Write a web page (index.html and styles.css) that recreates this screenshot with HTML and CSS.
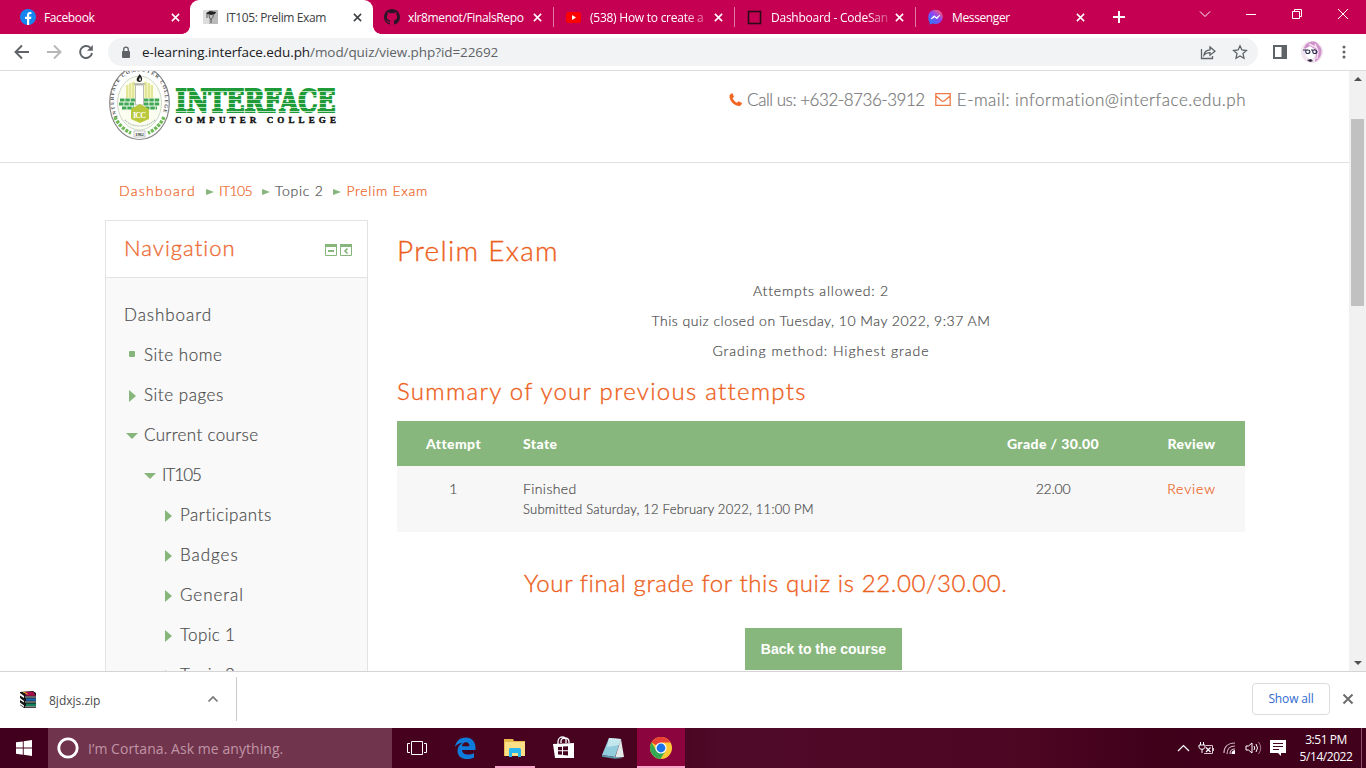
FILE: index.html
```html
<!DOCTYPE html>
<html lang="en">
<head>
<meta charset="utf-8">
<title>IT105: Prelim Exam</title>
<link rel="stylesheet" href="styles.css">
</head>
<body>
<div class="tabstrip">
  <div class="tab first">
    <svg class="fav" viewBox="0 0 16 16"><circle cx="8" cy="8" r="8" fill="#1686ee"/><path d="M7 16V10H5V7.700h2V6.200C7 4 8.200 3 10 3l1.400.1v2H10.400c-1 0-1.200.500-1.200 1.200v1.400h2.200L11 10H9.200v6z" fill="#fff"/></svg>
    <span class="tab-title">Facebook</span>
    <svg class="x" viewBox="0 0 10 10"><path d="M1 1l8 8M9 1l-8 8"/></svg>
  </div>
  <div class="tab active">
    <svg class="fav" viewBox="0 0 16 16"><path d="M0 1h15v14H0z" fill="#bbb"/><path d="M0 1h6v14H0z" fill="#ddd"/><path d="M3 4l4-2 6 1-1 2-4 1-4-1z" fill="#222"/><path d="M6 6c0 3 1 4 2 4s3-2 2-5M8 10v4M4 5v4" stroke="#555" fill="none"/></svg>
    <span class="tab-title">IT105: Prelim Exam</span>
    <svg class="x" viewBox="0 0 10 10"><path d="M1 1l8 8M9 1l-8 8"/></svg>
  </div>
  <div class="tab nosep">
    <svg class="fav" viewBox="0 0 16 16"><path fill="#2b1427" d="M8 0C3.580 0 0 3.580 0 8c0 3.540 2.290 6.530 5.470 7.590.4.070.55-.17.550-.38v-1.490c-2.230.48-2.700-.94-2.700-.94-.36-.92-.89-1.170-.89-1.170-.73-.5.050-.49.050-.49.810.06 1.230.83 1.230.83.720 1.230 1.880.870 2.340.67.070-.52.280-.87.510-1.070-1.780-.2-3.640-.89-3.640-3.950 0-.87.310-1.590.820-2.150-.08-.2-.36-1.020.080-2.120 0 0 .67-.21 2.200.820a7.600 7.600 0 014 0c1.530-1.040 2.200-.82 2.200-.82.440 1.100.160 1.920.080 2.120.510.560.820 1.270.820 2.150 0 3.070-1.870 3.750-3.650 3.950.290.250.540.730.540 1.480v2.190c0 .21.150.46.550.38A8 8 0 0016 8c0-4.420-3.580-8-8-8z"/></svg>
    <span class="tab-title">xlr8menot/FinalsRepo</span>
    <svg class="x" viewBox="0 0 10 10"><path d="M1 1l8 8M9 1l-8 8"/></svg>
  </div>
  <div class="tab">
    <svg class="fav" viewBox="0 0 16 16"><rect x="0" y="3" width="15" height="11" rx="2.500" fill="#f00"/><path d="M6 6l4 2.500L6 11z" fill="#fff"/></svg>
    <span class="tab-title fade">(538) How to create a</span>
    <svg class="x" viewBox="0 0 10 10"><path d="M1 1l8 8M9 1l-8 8"/></svg>
  </div>
  <div class="tab">
    <svg class="fav" viewBox="0 0 16 16"><rect x="1.500" y="2.500" width="12" height="12" fill="none" stroke="#2b0a18" stroke-width="1.600"/></svg>
    <span class="tab-title fade">Dashboard - CodeSan</span>
    <svg class="x" viewBox="0 0 10 10"><path d="M1 1l8 8M9 1l-8 8"/></svg>
  </div>
  <div class="tab">
    <svg class="fav" viewBox="0 0 16 16"><defs><linearGradient id="ms" x1="0" y1="1" x2=".8" y2="0"><stop offset="0" stop-color="#1688ff"/><stop offset=".6" stop-color="#8a45f5"/><stop offset="1" stop-color="#ff6070"/></linearGradient></defs><path d="M7.500 .8c4.200 0 7.300 3 7.300 7S11.700 15 7.500 15c-1 0-2-.2-2.800-.4L1.500 15.500l.2-2.300C.5 11.800.3 10 .3 8 .3 4 3.300.8 7.500.8z" fill="url(#ms)"/><path d="M3 10l3-3.300 2.500 1.800 3.300-2.300-2.800 3.500L6.500 8z" fill="#fff" stroke="#fff" stroke-width=".8"/></svg>
    <span class="tab-title">Messenger</span>
    <svg class="x" viewBox="0 0 10 10"><path d="M1 1l8 8M9 1l-8 8"/></svg>
  </div>
  <svg class="plus" viewBox="0 0 12 12"><path d="M6 0v12M0 6h12" stroke="#fff" stroke-width="2"/></svg>
  <div class="winbtns">
    <svg width="12" height="12" viewBox="0 0 12 12"><path d="M1 3.500l5 5 5-5"/></svg>
    <svg width="12" height="12" viewBox="0 0 12 12"><path d="M1 6.500h10"/></svg>
    <svg width="12" height="12" viewBox="0 0 12 12"><path d="M1.500 3.500h7v7h-7zM3.500 3.500v-2h7v7h-2"/></svg>
    <svg width="12" height="12" viewBox="0 0 12 12"><path d="M1 1l10 10M11 1L1 11"/></svg>
  </div>
</div>

<div class="toolbar">
  <svg width="16" height="16" viewBox="0 0 16 16" class="ic"><path d="M15 8H2M8 1.500L1.500 8 8 14.500"/></svg>
  <svg width="16" height="16" viewBox="0 0 16 16" class="ic dim"><path d="M1 8h13M8 1.500L14.500 8 8 14.500"/></svg>
  <svg width="16" height="16" viewBox="0 0 16 16" class="ic"><path d="M14 9a6 6 0 1 1-1.700-5.300"/><path d="M14.800 1v5.800H9z" fill="#5f6368" stroke="none"/></svg>
  <div class="omnibox">
    <svg width="10" height="13" viewBox="0 0 10 13"><rect x="1" y="5" width="8" height="7" rx="1" fill="#5f6368"/><path d="M2.700 5V3.500a2.300 2.300 0 014.600 0V5" fill="none" stroke="#5f6368" stroke-width="1.300"/></svg>
    <span class="url"><b>e-learning.interface.edu.ph</b>/mod/quiz/view.php?id=22692</span>
    <svg class="share" width="16" height="16" viewBox="0 0 16 16"><path d="M1.500 5v9.500h11V12M4 11c.5-3.500 2.500-5 6-5.200V3l5 4.200-5 4V8.600C7.500 8.500 5.500 9.200 4 11z"/></svg>
    <svg class="star" width="16" height="16" viewBox="0 0 16 16"><path d="M8 1.800l1.900 4.200 4.500.5-3.400 3.100 1 4.600L8 11.900l-4 2.300 1-4.600L1.600 6.500l4.500-.5z"/></svg>
  </div>
  <svg class="panel" width="14" height="14" viewBox="0 0 14 14"><path d="M1 1h12v12H1z" fill="none" stroke="#5f6368" stroke-width="2"/><path d="M8.500 0H14v14H8.500z" fill="#5f6368"/></svg>
  <svg class="avatar" width="22" height="22" viewBox="0 0 22 22"><circle cx="11" cy="11" r="11" fill="#f1e4f0"/><path d="M3 7C5 1 12-1 16 2l4 5c2 6-2 12-6 14l1-7-1-6-4-2-4 3z" fill="#cf92c9"/><path d="M4 8l5-3 5 4v6l-4 5-5-5z" fill="#fff"/><path d="M14 3l3 7-1 8M8 3l8 4" stroke="#f7dff4" stroke-width="1.500" fill="none"/><path d="M2 9h3m2 0c-3-1-3 4 0 3.500s2-3.500 0-3.500zm3 0h2m2 0c-3-1-3 4 0 3.500s2-3.500 0-3.500z" stroke="#222746" fill="none" stroke-width="1.100"/><path d="M6 19l4-1 2 2-3 1z" fill="#30213d"/></svg>
  <svg class="dots" width="4" height="14" viewBox="0 0 4 14"><circle cx="2" cy="2" r="1.500"/><circle cx="2" cy="7" r="1.500"/><circle cx="2" cy="12" r="1.500"/></svg>
</div>

<div class="viewport">
  <div class="page">
    <header class="site-header">
      <svg class="logo" width="240" height="76" viewBox="105 71 240 76">
        <defs>
          <pattern id="stripe" width="8" height="4" y="88" patternUnits="userSpaceOnUse"><rect width="8" height="4" fill="#b9e0bd"/><rect width="8" height="3" fill="#1f9a38"/></pattern>
          <path id="ringTop" d="M117.500 117C107 91 120 71.500 139.500 71.500s32 19.500 22 45.500"/>
        </defs>
        <ellipse cx="139.500" cy="103" rx="29.800" ry="36.500" fill="#fff" stroke="#888" stroke-width="1.200"/>
        <ellipse cx="139.500" cy="103" rx="22" ry="27" fill="#fbfdf0" stroke="#b7c7b0" stroke-width=".7"/>
        <text class="ring"><textPath href="#ringTop" textLength="116">INTERFACE COMPUTER COLLEGE</textPath></text>
        <path d="M126 98V86l9-5v17zM144 98V81l9 5v12z" fill="#f3f5bf"/>
        <path d="M127 98V85m3 13V83m3 15V82m13 16V82m3 16V83m3 15V85" stroke="#d1d66c"/>
        <path d="M135.500 85h8v20h-8z" fill="#fff" stroke="#b9beb6"/><path d="M134 84h11" stroke="#888"/>
        <path d="M139.500 74c4 4 3 8 0 8s-4-3-1-6z" fill="#222"/><path d="M140 77l1 3-1 1-1-1z" fill="#fff"/>
        <path d="M120 100h15m9 0h16M119 104h16m9 0h16M122 108h12m11 0h12" stroke="#3fa857" stroke-width="3.200" stroke-dasharray="4.500 .8"/>
        <path d="M131 109l9-5 9 5v10l-9 4-9-4z" fill="#b9c93b"/>
        <text class="icc" x="133" y="118" textLength="13">ICC</text>
        <path d="M115 117c3 7 9 13 16 16M164 117c-3 7-9 13-16 16" stroke="#6fb956" stroke-width="3.500" stroke-dasharray="3 1.200" fill="none"/>
        <path d="M125 120c7 8 22 8 30 0" stroke="#9aa" stroke-width="1.200" stroke-dasharray="1 1" fill="none"/>
        <rect x="134" y="131" width="11" height="6" fill="#fff" stroke="#888" stroke-width=".5"/>
        <text class="year" x="135" y="136.300" textLength="9">1982</text>
        <text class="brand" x="175.500" y="111.500" textLength="160" lengthAdjust="spacingAndGlyphs">INTERFACE</text>
        <text class="brand-sub" x="175" y="122.500" textLength="161">COMPUTER COLLEGE</text>
      </svg>
      <div class="contact">
        <svg width="13" height="13" viewBox="0 0 13 13"><path d="M.5 2.500C1.500.8 2.500.3 3.500.2L5 3.800 3.500 5.200C4.300 7 6 8.800 8 9.700l1.500-1.500 3.500 1.700c-.2 1.500-1.200 2.800-2.800 3C5 12.800.3 8 .5 2.500z" fill="#f26522"/></svg>
        <span class="phone">Call us: +632-8736-3912</span>
        <svg class="mail" width="16" height="13" viewBox="0 0 16 13"><path d="M.8.7h14.400v11.600H.8zM1 3l5.500 4.700c1 .8 2 .8 3 0L15 3" fill="none" stroke="#f07a45" stroke-width="1.300"/></svg>
        <span class="email">E-mail: information@interface.edu.ph</span>
      </div>
    </header>

    <nav class="crumbs">
      <a class="c1">Dashboard</a><i></i><a class="c2">IT105</a><i></i><span class="c3">Topic 2</span><i></i><a class="c4">Prelim Exam</a>
    </nav>

    <div class="columns">
      <aside class="block">
        <div class="block-head">
          <h2>Navigation</h2>
          <svg width="27" height="12" viewBox="0 0 27 12"><path d="M.5.5h11v11H.5zM15.500.5h11v11h-11z" fill="none" stroke="#87b67c"/><path d="M0 0h12v3H0zM15 0h12v3H15zM3 6h6v2H3z" fill="#87b67c"/><path d="M22.500 4.500L20 7l2.500 2.500" fill="none" stroke="#87b67c" stroke-width="1.700"/></svg>
        </div>
        <ul class="tree">
          <li class="l0 wide">Dashboard</li>
          <li class="l1"><i class="sq"></i>Site home</li>
          <li class="l1"><i class="rt"></i>Site pages</li>
          <li class="l1 snug"><i class="dn"></i>Current course</li>
          <li class="l2 tight"><i class="dn"></i>IT105</li>
          <li class="l3"><i class="rt"></i>Participants</li>
          <li class="l3 wide"><i class="rt"></i>Badges</li>
          <li class="l3 wide"><i class="rt"></i>General</li>
          <li class="l3 snug"><i class="rt"></i>Topic 1</li>
          <li class="l3 snug"><i class="rt"></i>Topic 2</li>
        </ul>
      </aside>
      <main class="content">
        <h1>Prelim Exam</h1>
        <div class="info">
          <p>Attempts allowed: 2</p>
          <p class="closed">This quiz closed on Tuesday, 10 May 2022, 9:37 AM</p>
          <p class="method">Grading method: Highest grade</p>
        </div>
        <h3>Summary of your previous attempts</h3>
        <table class="attempts">
          <thead><tr><th class="a">Attempt</th><th class="s">State</th><th class="g">Grade / 30.00</th><th class="r">Review</th></tr></thead>
          <tbody><tr><td class="a">1</td><td class="s">Finished<span class="sub">Submitted Saturday, 12 February 2022, 11:00 PM</span></td><td class="g">22.00</td><td class="r"><a>Review</a></td></tr></tbody>
        </table>
        <h3 class="final">Your final grade for this quiz is 22.00/30.00.</h3>
        <button class="back">Back to the course</button>
      </main>
    </div>
  </div>
  <div class="scrollbar"><i class="up"></i><div class="thumb"></div><i class="down"></i></div>
</div>

<div class="downloads">
  <svg width="17" height="17" viewBox="0 0 17 17"><path d="M0 1l13-1 3 2v15H4l-4-3z" fill="#151515"/><path d="M4 .8h9l3 4H6z" fill="#a90f4d"/><path d="M6 7.300h10v2.500H6z" fill="#1765a8"/><path d="M6 12.500h10v2.500H6z" fill="#12805a"/><path d="M0 2l4 3v2L0 4.500m0 2.500l4 3v1.500L0 9m0 2.500l4 3V16l-4-2.500z" fill="#fff"/><path d="M5 6h11M5 11h11M5 15.800h11" stroke="#ddd" stroke-width=".8"/><path d="M3 1l4 1.500v1" stroke="#e3c322" fill="none"/></svg>
  <span class="file">8jdxjs.zip</span>
  <svg class="chev" width="12" height="8" viewBox="0 0 12 8"><path d="M1.500 6.500L6 2l4.500 4.500" fill="none" stroke="#777" stroke-width="1.700"/></svg>
  <span class="vsep"></span>
  <span class="showall">Show all</span>
  <svg width="12" height="12" viewBox="0 0 12 12"><path d="M1.500 1.500l9 9M10.500 1.500l-9 9" stroke="#6b6b6b" stroke-width="1.900"/></svg>
</div>

<div class="taskbar">
  <div class="start"><svg width="16" height="16" viewBox="0 0 16 16"><path d="M0 2.300L6.800 1.400v6.200H0zM7.700 1.200L16 0v7.600H7.700zM0 8.500h6.800v6.200L0 13.700zM7.700 8.500H16V16l-8.300-1.200z" fill="#fff"/></svg></div>
  <div class="cortana"><svg width="22" height="22" viewBox="0 0 22 22"><circle cx="11" cy="11" r="9.200" fill="none" stroke="#fff" stroke-width="2.800"/></svg><span>I’m Cortana. Ask me anything.</span></div>
  <div class="app"><svg width="20" height="14" viewBox="0 0 20 14"><path d="M4.500.5h11v13h-11zM3 2.500H.5v9H3M17 2.500h2.500v9H17" fill="none" stroke="#fff"/></svg></div>
  <div class="app"><svg width="21" height="22" viewBox="0 0 21 22"><path d="M0 10C1 3.500 5.500.5 10.800.5 17 .5 20.500 5 20.500 10.500V13H7c.2 3.200 3 4.600 6 4.600 2.500 0 4.500-.7 6-1.600v4.500c-2 1-4.500 1.500-7 1.500-5.500 0-9.500-3-9.500-8.300 0-3.500 2-6.300 5-7.900C3.800 6.300 1.500 7.800 0 10zm7.100-.8h7.300C14.400 7 13.300 5.300 11 5.300S7.300 7 7.100 9.200z" fill="#0f7bdb"/></svg></div>
  <div class="app open"><svg width="22" height="20" viewBox="0 0 22 20"><path d="M0 1h9l1 2h11v15H0z" fill="#e7b84b"/><path d="M1 4h20v14H1z" fill="#fbdf86"/><path d="M5 19v-7c0-2 1-2 2-2h8c2 0 2 1 2 2v7h-3v-4H8v4z" fill="#29b7ef"/></svg></div>
  <div class="app"><svg width="22" height="24" viewBox="0 0 22 24"><path d="M0 8l21-1v15L2 22z" fill="#fff"/><path d="M5 8V6c0-3 2-5 4-5s4 1 4 3v3M8 7V5c0-2 2-3 4-3 3 0 4 2 4 4v1" fill="none" stroke="#fff" stroke-width="1.300"/><path d="M5 11l4-.3v3.500H5zm5-.4l5-.4v4h-5zM5 15.200h4v3.600l-4-.3zm5 0h5v4.200l-5-.5z" fill="#46031f"/></svg></div>
  <div class="app"><svg width="24" height="22" viewBox="0 0 24 22"><path d="M8 1l12 1-6 18-13-2z" fill="#91cddd"/><path d="M8 1l12 1-2 6-12 2z" fill="#c4e7ee"/><path d="M20 2l3 18-9 1z" fill="#e3e9e9"/><path d="M1 18l13 2 8 1-8 .8-13-2z" fill="#5d9aa9"/><path d="M8 2l12 1" stroke="#eee" stroke-dasharray="1 1"/></svg></div>
  <div class="app current"><svg width="22" height="22" viewBox="0 0 22 22"><circle cx="11" cy="11" r="11" fill="#fcc934"/><path d="M11 11L1.500 5.500A11 11 0 0 1 20.500 5.500H11z" fill="#e94235"/><path d="M1.500 5.500A11 11 0 0 0 10.500 22l5.200-8.500L11 11 6.300 13.600z" fill="#34a853"/><circle cx="11" cy="11" r="5.600" fill="#fff"/><circle cx="11" cy="11" r="4.400" fill="#1a73e8"/></svg></div>
  <div class="tray">
    <svg width="13" height="8" viewBox="0 0 13 8"><path d="M1 7l5.500-5.500L12 7" fill="none" stroke="#fff" stroke-width="1.200"/></svg>
    <svg width="17" height="13" viewBox="0 0 17 13"><path d="M2.500 0v3M5.500 0v3M1 3h6v2c0 3-6 3-6 0zM4 7v4" fill="none" stroke="#fff"/><path d="M8 3.500h6.500v8H6" fill="none" stroke="#d9c3cc"/><path d="M15.500 6v3" stroke="#d9c3cc"/><path d="M8 5.500l4.500 4.500M12.500 5.500L8 10" stroke="#fff" stroke-width="1.200"/></svg>
    <svg width="14" height="14" viewBox="0 0 14 14"><path d="M1 12C1 6 5 2 12 2M4 13c0-5 3-8 8-8M7 13c0-3 2-5 5-5" fill="none" stroke="#ccb7bf" stroke-width="1.200"/><path d="M12 9v4H8.500A4 4 0 0 1 12 9z" fill="#fff"/></svg>
    <svg width="17" height="14" viewBox="0 0 17 14"><path d="M1 5h2.500L7 2v10L3.500 9H1zM9 5q1.500 2 0 4M11 3q3 4 0 8" fill="none" stroke="#fff"/><path d="M13.500 1q4.500 6 0 12" fill="none" stroke="#a0788b"/></svg>
    <svg width="17" height="16" viewBox="0 0 17 16"><path d="M0 0h16v13h-5v3l-3-3H0z" fill="#fff"/><path d="M3 3.500h10M3 6.500h10M3 9.500h6" stroke="#46031f"/></svg>
    <div class="clock"><span>3:51 PM</span><span class="date">5/14/2022</span></div>
    <span class="desk"></span>
  </div>
</div>
</body>
</html>
```
FILE: styles.css
```css
* { box-sizing: border-box; }
body { margin: 0; width: 1366px; height: 768px; overflow: hidden; background: #fff; font-family: "Open Sans", "Noto Sans", sans-serif; font-size: 12px; }
svg { display: block; flex: none; }
h1, h2, h3, p, ul { margin: 0; padding: 0; font-weight: 300; }

/* tab strip */
.tabstrip { display: flex; height: 34px; background: #c50053; padding-left: 10px; }
.tab { width: 181px; height: 34px; display: flex; align-items: center; padding: 0 11px 0 12px; color: #fff; border-left: 1px solid transparent; background: linear-gradient(#df7ba5, #df7ba5) no-repeat 0 7px / 1px 20px; background-origin: border-box; }
.tab.first { background: none; padding-left: 9px; width: 180px; padding-right: 10px; }
.tab.nosep { background: none; padding-left: 11px; }
.tab.active { width: 183px; background: #fff; color: #3c4043; border-radius: 9px 9px 0 0; margin-right: -1px; position: relative; }
.tab.active::before, .tab.active::after { content: ""; position: absolute; bottom: 0; width: 8px; height: 8px; }
.tab.active::before { left: -9px; background: radial-gradient(circle at 0 0, transparent 7.500px, #fff 8px); }
.tab.active::after { right: -8px; background: radial-gradient(circle at 100% 0, transparent 7.500px, #fff 8px); }
.fav { width: 16px; height: 16px; }
.tab-title { margin-left: 8px; white-space: nowrap; overflow: hidden; font-size: 12px; letter-spacing: -.37px; margin-right: 6px; flex: 1; }
.tab.active .tab-title { margin-left: 7px; }
.fade { -webkit-mask-image: linear-gradient(90deg, #000 80%, rgba(0,0,0,.25)); mask-image: linear-gradient(90deg, #000 80%, rgba(0,0,0,.25)); letter-spacing: -.25px; }
.x { width: 9px; height: 9px; }
.x path { stroke: currentColor; stroke-width: 1.700; }
.plus { width: 12px; height: 12px; margin: 11px 0 0 17px; }
.winbtns { margin-left: auto; display: flex; gap: 34px; padding: 8px 17px 0 0; }
.winbtns path { stroke: #fff; fill: none; }

/* address bar */
.toolbar { display: flex; align-items: center; height: 37px; border-bottom: 1px solid #dcdcdc; padding: 0 20px 0 14px; }
.ic { margin-right: 16px; }
.ic path { fill: none; stroke: #5f6368; stroke-width: 1.900; }
.ic.dim path { stroke: #b5b7b9; }
.ic path[fill] { fill: #5f6368; stroke: none; }
.omnibox { width: 1150px; margin-left: -2px; height: 28px; border-radius: 14px; background: #f1f3f4; display: flex; align-items: center; padding: 0 10px 0 13px; }
.url { margin-left: 11px; font-size: 13.500px; letter-spacing: -.08px; color: #5f6368; }
.url b { font-weight: 400; color: #202124; }
.share { margin-left: auto; margin-right: 16px; }
.share path, .star path { fill: none; stroke: #5f6368; stroke-width: 1.300; }
.panel { margin-left: 15px; }
.avatar { margin-left: 14px; }
.dots { margin-left: auto; fill: #5f6368; }

/* page */
.viewport { display: flex; height: 600px; overflow: hidden; }
.page { width: 1349px; height: 600px; overflow: hidden; font-family: Lato, "Open Sans", sans-serif; font-weight: 300; color: #4c4c4c; font-variant-ligatures: none; -webkit-text-stroke: .2px currentColor; }
.logo { -webkit-text-stroke: 0; }
.site-header { height: 92px; border-bottom: 1px solid #e1e1e1; padding: 0 104px 0 105px; display: flex; justify-content: space-between; }
.ring { font: bold 5px "Liberation Serif", serif; fill: #444; }
.icc { font: bold 8px "Liberation Serif", serif; fill: #fff; }
.year { font: bold 5px "Liberation Serif", serif; fill: #444; }
.brand { font: bold 32px "DejaVu Serif", serif; fill: url(#stripe); stroke: url(#stripe); stroke-width: 2; -webkit-text-stroke: 2px; }
.brand-sub { font: bold 9px "Liberation Serif", serif; fill: #111; stroke: #111; stroke-width: .4; }
.contact { display: flex; align-items: center; height: 56px; font-size: 17px; color: #777; white-space: nowrap; }
.contact svg { margin-top: 1px; }
.phone { margin: 0 10px 0 5px; letter-spacing: -.45px; }
.email { margin-left: 6px; letter-spacing: .5px; margin-right: -1px; }
.crumbs { display: flex; align-items: center; height: 57px; padding: 0 0 2px 119px; font-size: 14px; }
.crumbs a, .attempts a { color: #ed601b; }
.crumbs i { margin: 3px 5px 0 10px; border-left: 8px solid #87b67c; border-top: 3.500px solid transparent; border-bottom: 3.500px solid transparent; }
.c1 { letter-spacing: 1.270px; }
.c2 { letter-spacing: -.6px; }
.c3, .c4 { letter-spacing: .7px; }
.columns { display: flex; padding-left: 105px; }
.block { width: 263px; height: 480px; border: 1px solid #e3e3e3; background: #f9f9f9; }
.block-head { height: 57px; background: #fff; border-bottom: 1px solid #e3e3e3; display: flex; align-items: center; justify-content: space-between; padding: 0 15px 3px 18px; }
.block-head svg { margin-top: 5px; }
.block-head h2 { font-size: 22px; color: #ed6b35; letter-spacing: 1.050px; }
.tree { list-style: none; padding: 16px 0 0 18px; font-size: 17px; letter-spacing: .55px; }
.tree li { height: 40px; display: flex; align-items: center; }
.tree .wide { letter-spacing: .95px; }
.tree .snug { letter-spacing: .35px; }
.tree .tight { letter-spacing: -1px; }
.tree i { width: 14px; margin-right: 6px; display: flex; justify-content: center; }
.tree i::before { content: ""; }
.l2 { padding-left: 18px; }
.l3 { padding-left: 36px; }
.sq::before { width: 6px; height: 6px; background: #87b67c; margin: 0 0 0 2px; border-radius: 1px; }
.rt::before { border-left: 7px solid #87b67c; border-top: 6px solid transparent; border-bottom: 6px solid transparent; margin: 3px 0 0 2px; }
.dn::before { border-top: 6px solid #87b67c; border-left: 6px solid transparent; border-right: 6px solid transparent; margin: 4px 0 0 2px; }
.content { width: 848px; margin-left: 29px; }
h1 { height: 56px; line-height: 60px; font-size: 28px; color: #ed601b; letter-spacing: 1.300px; }
.info { text-align: center; font-size: 14px; line-height: 30px; letter-spacing: .8px; }
.closed { letter-spacing: .48px; }
.method { letter-spacing: .97px; }
h3 { font-size: 24px; line-height: 50px; height: 55px; color: #ed601b; white-space: nowrap; letter-spacing: 1.280px; }
h1, h2, h3 { -webkit-text-stroke: .35px currentColor; }
.attempts { width: 848px; table-layout: fixed; border-collapse: collapse; font-size: 14px; letter-spacing: .4px; }
.attempts th { height: 45px; background: #88b77d; color: #fff; font-weight: 900; padding: 0; text-align: center; -webkit-text-stroke: 0; }
.attempts td { height: 66px; background: #f7f7f7; vertical-align: top; padding: 13px 0 0; line-height: 20px; text-align: center; }
.attempts .a { width: 113px; }
.attempts .s { text-align: left; padding-left: 13px; }
.attempts .g { width: 170px; }
.attempts td.g { letter-spacing: -.2px; }
.attempts .r { width: 107px; }
.attempts td.r { letter-spacing: .9px; }
.sub { display: block; font-size: 13px; letter-spacing: .24px; }
.final { margin: 26px 0 0 127px; height: 70px; letter-spacing: .6px; }
.back { display: block; margin-left: 348px; width: 157px; height: 42px; border: 0; background: #88b77d; color: #fff; padding: 0; font: bold 14px "Liberation Sans", Arial, sans-serif; -webkit-text-stroke: 0; }
.scrollbar { width: 17px; background: #f1f1f1; display: flex; flex-direction: column; align-items: center; padding: 6px 0; }
.up { border-bottom: 4px solid #505050; border-left: 4px solid transparent; border-right: 4px solid transparent; }
.thumb { width: 13px; height: 187px; margin-top: 38px; background: #c1c1c1; }
.down { margin-top: auto; border-top: 4px solid #505050; border-left: 4px solid transparent; border-right: 4px solid transparent; }

/* downloads */
.downloads { height: 57px; border-top: 1px solid #d4d4d4; background: #fff; display: flex; align-items: center; padding: 0 12px 2px 20px; color: #4a4a4a; }
.file { width: 157px; margin-left: 12px; margin-top: 2px; }
.chev { margin-right: 17px; margin-left: 1px; }
.vsep { width: 1px; height: 44px; background: #ccc; }
.showall { margin-left: auto; margin-right: 12px; width: 78px; height: 32px; border: 1px solid #dadce0; border-radius: 4px; color: #2f6bd0; text-align: center; line-height: 29px; font-weight: 500; letter-spacing: -.15px; }

/* taskbar */
.taskbar { height: 40px; display: flex; background: linear-gradient(90deg, #41001d 0, #48031f 48%, #500a29 53%, #4d0622 75%, #3f001a 85%, #41001c); }
.start { width: 48px; display: flex; align-items: center; justify-content: center; }
.cortana { width: 344px; background: #70344d; display: flex; align-items: center; padding-left: 9px; color: #c094a6; font-size: 14px; letter-spacing: .06px; }
.cortana span { margin-left: 9px; }
.app { width: 49px; display: flex; align-items: center; justify-content: center; }
.open { background: linear-gradient(#f7a5c8, #f7a5c8) no-repeat center bottom / 40px 2px; }
.current { width: 48px; background: #8c043e; border-bottom: 2px solid #f7a5c8; padding-top: 2px; }
.tray { margin-left: auto; display: flex; align-items: center; color: #fff; }
.tray > svg { margin-right: 8px; }
.tray > svg:nth-of-type(5) { margin-right: 5px; }
.clock { width: 68px; display: flex; flex-direction: column; align-items: center; line-height: 17px; letter-spacing: -.45px; padding-bottom: 1px; }
.date { letter-spacing: -.45px; }
.desk { width: 1px; height: 40px; background: #8c5468; margin-left: 1px; margin-right: 4px; }
```
